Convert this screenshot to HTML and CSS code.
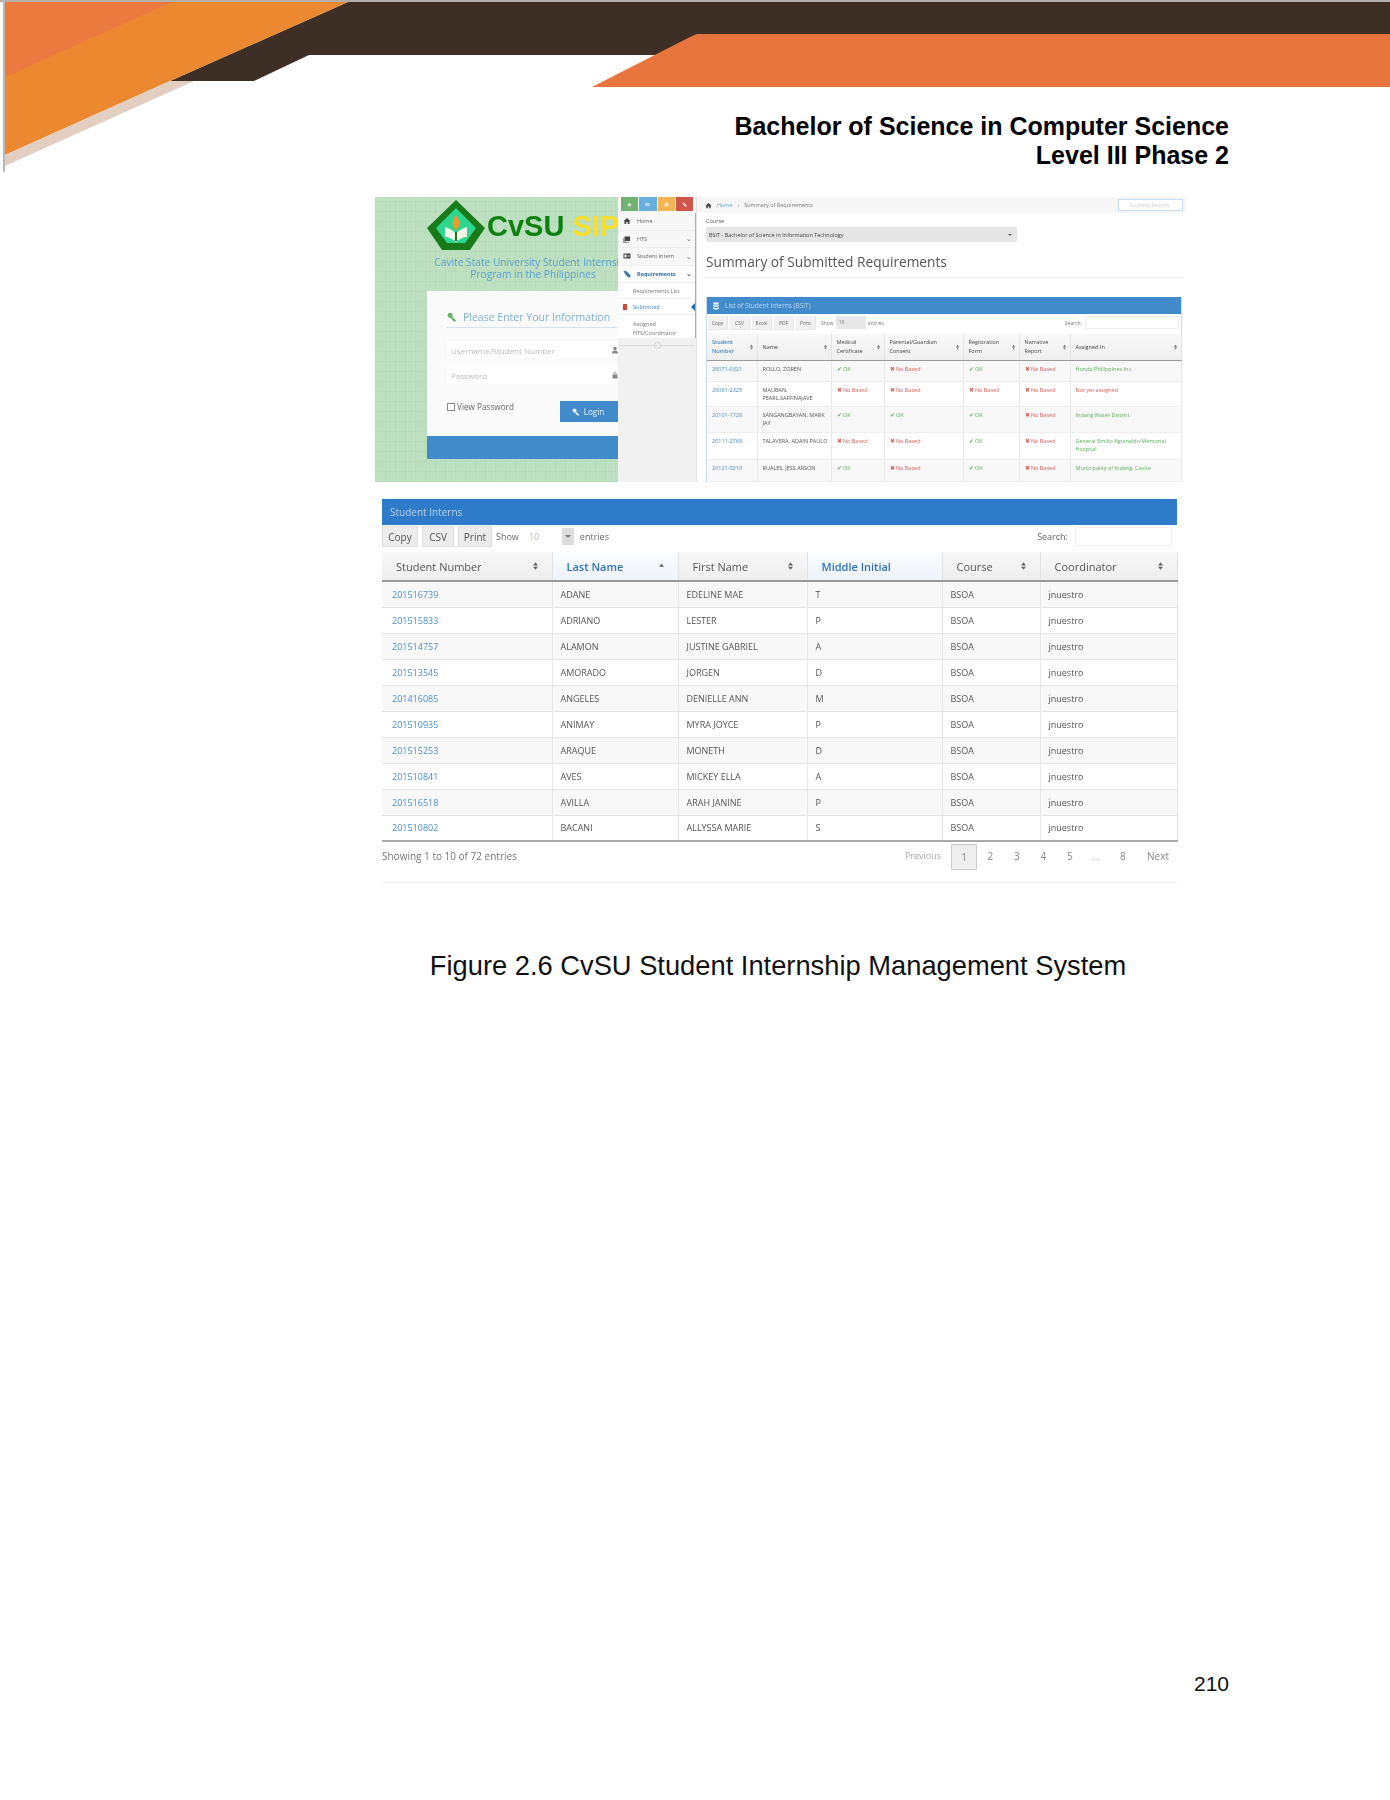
FILE: index.html
```html
<!DOCTYPE html>
<html lang="en">
<head>
<meta charset="utf-8">
<title>CvSU Student Internship Management System</title>
<link rel="stylesheet" href="styles.css">
</head>
<body>
<svg class="defs" width="0" height="0" aria-hidden="true">
  <symbol id="i-home" viewBox="0 0 16 16"><path d="M8 2 1 8.5h2V14h3.5v-4h3v4H13V8.500h2z"/></symbol>
  <symbol id="i-key" viewBox="0 0 16 16"><circle cx="5" cy="5" r="4"/><path d="M7 6l7 7v2h-3l-1-1.500-1 .5-1-2-3-4z"/></symbol>
  <symbol id="i-user" viewBox="0 0 16 16"><circle cx="8" cy="5" r="3.500"/><path d="M2 15c0-4 2-6 6-6s6 2 6 6z"/></symbol>
  <symbol id="i-lock" viewBox="0 0 16 16"><path d="M3 7h10v8H3zM5 7V5a3 3 0 0 1 6 0v2H9.500V5a1.500 1.500 0 0 0-3 0v2z"/></symbol>
  <symbol id="i-db" viewBox="0 0 16 16"><ellipse cx="8" cy="3" rx="6" ry="2.500"/><path d="M2 5c2 2.500 10 2.500 12 0v3c-2 2.500-10 2.500-12 0zM2 10c2 2.500 10 2.500 12 0v3c-2 3-10 3-12 0z"/></symbol>
  <symbol id="i-book" viewBox="0 0 16 16"><path d="M3 3h11v9H5v2H3zM1 6h1v9h10v1H1z"/></symbol>
  <symbol id="i-card" viewBox="0 0 16 16"><path d="M1 3h14v10H1zM3 5v6h4V5zm6 1v1h4V6zm0 3v1h4V9z" fill-rule="evenodd"/></symbol>
  <symbol id="i-pin" viewBox="0 0 16 16"><path d="M1 3l4-2 10 9-1 5-5-1z"/></symbol>
  <symbol id="i-sort" viewBox="0 0 8 12"><path d="M4 0 8 5H0zM4 12 0 7h8z"/></symbol>
  <symbol id="i-up" viewBox="0 0 8 12"><path d="M4 2 8 7H0z"/></symbol>
  <symbol id="i-mail" viewBox="0 0 16 16"><path d="M1 3h14v2L8 9 1 5zM1 7l7 4 7-4v6H1z"/></symbol>
</svg>

<div class="page">
  <header class="top">
    <svg class="banner" viewBox="0 0 1390 172" width="1390" height="172" aria-hidden="true">
      <rect x="0" y="0" width="1390" height="2" fill="#b5afa9"/>
      <rect x="3" y="0" width="2" height="172" fill="#bdb7b1"/>
      <polygon points="348,2 1390,2 1390,55 309,55 254,81 170,81" fill="#3d2f25"/>
      <polygon points="592,87 690,37 697,34 1390,34 1390,87" fill="#e8743e"/>
      <polygon points="5,2 348,2 170,81 5,155" fill="#ec8830"/>
      <polygon points="5,2 172,2 5,77" fill="#ea7a3e"/>
      <polygon points="5,155 170,81 194,81 5,166" fill="#e3cfc2"/>
    </svg>
    <div class="title">
      <div>Bachelor of Science in Computer Science</div>
      <div>Level III Phase 2</div>
    </div>
  </header>

  <section class="shot">
    <div class="login">
      <div class="brand">
        <svg class="logo" viewBox="0 0 58 50" width="58" height="50" aria-hidden="true">
          <polygon points="0,28 29,0 58,28 43,50 15,50" fill="#187a18"/>
          <polygon points="9,28 29,8 49,28 38,43 20,43" fill="#2fd690"/>
          <path d="M18 27c4 1 8 3 11 7 3-4 7-6 11-7v10c-4 0-8 2-11 5-3-3-7-5-11-5z" fill="#f2f5e8"/>
          <path d="M29 30c-5-4-4-10 0-15 4 5 5 11 0 15z" fill="#ee9a2c"/>
          <path d="M28 32h2v9h-2z" fill="#187a18"/>
        </svg>
        <div class="wordmark">CvSU <span class="sip">SIP</span></div>
      </div>
      <div class="subtitle">Cavite State University Student Internship<br>Program in the Philippines</div>
      <div class="card">
        <div class="card-body">
          <div class="card-head"><svg class="ic key"><use href="#i-key"/></svg>Please Enter Your Information</div>
          <div class="field">Username/Student Number<svg class="ic"><use href="#i-user"/></svg></div>
          <div class="field">Password<svg class="ic"><use href="#i-lock"/></svg></div>
          <div class="card-row">
            <span class="check"></span><span class="check-label">View Password</span>
            <span class="login-btn"><svg class="ic"><use href="#i-key"/></svg>Login</span>
          </div>
        </div>
        <div class="card-foot"></div>
      </div>
    </div>

    <aside class="sidebar">
      <div class="shortcuts">
        <span class="sq sq-g"><svg class="ic"><use href="#i-home"/></svg></span>
        <span class="sq sq-b"><svg class="ic"><use href="#i-mail"/></svg></span>
        <span class="sq sq-o"><svg class="ic"><use href="#i-book"/></svg></span>
        <span class="sq sq-r"><svg class="ic"><use href="#i-pin"/></svg></span>
      </div>
      <ul class="nav">
        <li class="nav-item"><svg class="ic"><use href="#i-home"/></svg>Home</li>
        <li class="nav-item"><svg class="ic"><use href="#i-book"/></svg>HTS<i class="chev">⌄</i></li>
        <li class="nav-item"><svg class="ic"><use href="#i-card"/></svg>Student Intern<i class="chev">⌄</i></li>
        <li class="nav-item nav-active"><svg class="ic"><use href="#i-pin"/></svg>Requirements<i class="chev">⌄</i></li>
        <li class="nav-sub">Requirements List</li>
        <li class="nav-sub nav-current">Submitted<span class="nav-arrow"></span></li>
        <li class="nav-sub nav-two">Assigned<br>HTS/Coordinator</li>
      </ul>
      <div class="collapse"><span>‹</span></div>
    </aside>

    <main class="content">
      <div class="crumbs">
        <svg class="ic"><use href="#i-home"/></svg><span class="crumb-link">Home</span><span class="crumb-sep">›</span><span>Summary of Requirements</span>
        <span class="topsearch">Student Search</span>
      </div>
      <div class="course">Course</div>
      <div class="course-select"><span>BSIT - Bachelor of Science in Information Technology</span><i class="caret"></i></div>
      <h1 class="summary">Summary of Submitted Requirements</h1>
      <div class="panel">
        <div class="panel-head"><svg class="ic"><use href="#i-db"/></svg>List of Student Interns (BSIT)</div>
        <div class="tools">
          <span class="tbtn">Copy</span><span class="tbtn">CSV</span><span class="tbtn">Excel</span><span class="tbtn">PDF</span><span class="tbtn">Print</span>
          <span class="tshow">Show</span><span class="tselect">10</span><span>entries</span>
          <span class="tsearch">Search:</span><span class="tinput"></span>
        </div>
        <table class="mini">
          <colgroup><col class="m1"><col class="m2"><col class="m3"><col class="m4"><col class="m5"><col class="m6"><col class="m7"></colgroup>
          <thead>
            <tr>
              <th class="sorted">Student Number<svg class="sort"><use href="#i-sort"/></svg></th>
              <th>Name<svg class="sort"><use href="#i-sort"/></svg></th>
              <th>Medical Certificate<svg class="sort"><use href="#i-sort"/></svg></th>
              <th>Parental/Guardian Consent<svg class="sort"><use href="#i-sort"/></svg></th>
              <th>Registration Form<svg class="sort"><use href="#i-sort"/></svg></th>
              <th>Narrative Report<svg class="sort"><use href="#i-sort"/></svg></th>
              <th>Assigned In<svg class="sort"><use href="#i-sort"/></svg></th>
            </tr>
          </thead>
          <tbody>
            <tr class="r21 odd"><td class="lnk">20071-0321</td><td>ROLLO, ZOREN</td><td class="ok">✔ OK</td><td class="no">✖ No Based</td><td class="ok">✔ OK</td><td class="no">✖ No Based</td><td class="ok">Honda Philippines Inc.</td></tr>
            <tr class="r25"><td class="lnk">20081-2325</td><td>MAUBAN,<br>PEARL,SAFFINAJAVE</td><td class="no">✖ No Based</td><td class="no">✖ No Based</td><td class="no">✖ No Based</td><td class="no">✖ No Based</td><td class="no">Not yet assigned</td></tr>
            <tr class="r26 odd"><td class="lnk">20101-1728</td><td>SANGANGBAYAN, MARK JAY</td><td class="ok">✔ OK</td><td class="ok">✔ OK</td><td class="ok">✔ OK</td><td class="no">✖ No Based</td><td class="ok">Indang Water District</td></tr>
            <tr class="r28"><td class="lnk">20111-2768</td><td>TALAVERA, ADAIN PAULO</td><td class="no">✖ No Based</td><td class="no">✖ No Based</td><td class="ok">✔ OK</td><td class="no">✖ No Based</td><td class="ok">General Emilio Aguinaldo Memorial Hospital</td></tr>
            <tr class="r22 odd"><td class="lnk">20121-0219</td><td>RUALES, JESS ARSON</td><td class="ok">✔ OK</td><td class="no">✖ No Based</td><td class="ok">✔ OK</td><td class="no">✖ No Based</td><td class="ok">Municipality of Indang, Cavite</td></tr>
          </tbody>
        </table>
      </div>
    </main>
  </section>

  <section class="interns">
    <div class="interns-head">Student Interns</div>
    <div class="interns-tools">
      <span class="btn">Copy</span><span class="btn btn-s">CSV</span><span class="btn btn-m">Print</span>
      <span class="show">Show</span><span class="select">10<i class="select-arrow"></i></span><span class="entries">entries</span>
      <span class="search">Search:</span><span class="search-input"></span>
    </div>
    <table class="big">
      <colgroup><col class="b1"><col class="b2"><col class="b3"><col class="b4"><col class="b5"><col class="b6"></colgroup>
      <thead>
        <tr>
          <th>Student Number<svg class="sort"><use href="#i-sort"/></svg></th>
          <th class="hl">Last Name<svg class="sort"><use href="#i-up"/></svg></th>
          <th>First Name<svg class="sort"><use href="#i-sort"/></svg></th>
          <th class="hl">Middle Initial</th>
          <th>Course<svg class="sort"><use href="#i-sort"/></svg></th>
          <th>Coordinator<svg class="sort"><use href="#i-sort"/></svg></th>
        </tr>
      </thead>
      <tbody>
        <tr><td class="lnk">201516739</td><td>ADANE</td><td>EDELINE MAE</td><td>T</td><td>BSOA</td><td>jnuestro</td></tr>
        <tr><td class="lnk">201515833</td><td>ADRIANO</td><td>LESTER</td><td>P</td><td>BSOA</td><td>jnuestro</td></tr>
        <tr><td class="lnk">201514757</td><td>ALAMON</td><td>JUSTINE GABRIEL</td><td>A</td><td>BSOA</td><td>jnuestro</td></tr>
        <tr><td class="lnk">201513545</td><td>AMORADO</td><td>JORGEN</td><td>D</td><td>BSOA</td><td>jnuestro</td></tr>
        <tr><td class="lnk">201416085</td><td>ANGELES</td><td>DENIELLE ANN</td><td>M</td><td>BSOA</td><td>jnuestro</td></tr>
        <tr><td class="lnk">201510935</td><td>ANIMAY</td><td>MYRA JOYCE</td><td>P</td><td>BSOA</td><td>jnuestro</td></tr>
        <tr><td class="lnk">201515253</td><td>ARAQUE</td><td>MONETH</td><td>D</td><td>BSOA</td><td>jnuestro</td></tr>
        <tr><td class="lnk">201510841</td><td>AVES</td><td>MICKEY ELLA</td><td>A</td><td>BSOA</td><td>jnuestro</td></tr>
        <tr><td class="lnk">201516518</td><td>AVILLA</td><td>ARAH JANINE</td><td>P</td><td>BSOA</td><td>jnuestro</td></tr>
        <tr><td class="lnk">201510802</td><td>BACANI</td><td>ALLYSSA MARIE</td><td>S</td><td>BSOA</td><td>jnuestro</td></tr>
      </tbody>
    </table>
    <div class="interns-foot">
      <span class="showing">Showing 1 to 10 of 72 entries</span>
      <div class="pager">
        <span class="pg pg-prev">Previous</span><span class="pg pg-on">1</span><span class="pg">2</span><span class="pg">3</span><span class="pg">4</span><span class="pg">5</span><span class="pg pg-dim">…</span><span class="pg">8</span><span class="pg pg-next">Next</span>
      </div>
    </div>
  </section>

  <p class="caption">Figure 2.6 CvSU Student Internship Management System</p>
  <p class="pageno">210</p>
</div>
</body>
</html>
```

FILE: styles.css
```css
* { box-sizing: border-box; }
html, body { margin: 0; padding: 0; background: #fff; }
body { font-family: "Open Sans", "Liberation Sans", sans-serif; color: #555; }
.defs { display: block; height: 0; }
.page { width: 1390px; height: 1800px; overflow: hidden; }
ul { list-style: none; margin: 0; padding: 0; }

/* header */
.top { display: grid; height: 172px; }
.banner { grid-area: 1 / 1; display: block; }
.title {
  grid-area: 1 / 1;
  padding: 112px 161px 0 0;
  text-align: right;
  font: bold 25px/29px "Liberation Sans", Arial, sans-serif;
  color: #000;
}

/* top screenshot */
.shot {
  display: flex;
  width: 811px;
  height: 285px;
  margin: 25px 0 0 375px;
  overflow: hidden;
  filter: blur(.7px);
  background: #fff;
}
.ic { width: 8px; height: 8px; fill: currentColor; flex: none; }

.login {
  width: 243px;
  flex: none;
  overflow: hidden;
  padding: 3px 0 0 52px;
  background-color: #bde0c1;
  background-image:
    repeating-linear-gradient(0deg, rgba(120,170,130,.09) 0 1px, transparent 1px 10px),
    repeating-linear-gradient(90deg, rgba(120,170,130,.09) 0 1px, transparent 1px 10px);
}
.brand { display: flex; align-items: center; gap: 2px; width: 300px; }
.logo { flex: none; }
.wordmark { font: bold 29px/1 "Liberation Sans", Arial, sans-serif; color: #0f7f10; white-space: nowrap; padding-top: 3px; }
.sip { color: #f7df2c; }
.subtitle {
  width: 212px;
  margin-top: 6px;
  font-size: 10.200px;
  line-height: 12px;
  text-align: center;
  color: #5a9fd0;
  white-space: nowrap;
}
.card { width: 316px; margin-top: 11px; }
.card-body { height: 145px; background: #fafafa; padding: 18px 0 0 20px; }
.card-head {
  display: flex;
  align-items: center;
  gap: 6px;
  height: 19px;
  padding-bottom: 3px;
  border-bottom: 1px solid #d4e3f1;
  font-size: 10.500px;
  color: #7fb0d8;
  white-space: nowrap;
}
.card-head .key { width: 10px; height: 10px; color: #6cb06c; }
.field {
  display: flex;
  align-items: center;
  justify-content: space-between;
  width: 173px;
  height: 18px;
  margin-top: 7px;
  padding: 0 1px 0 4px;
  background: #fff;
  border-radius: 2px;
  font-size: 8px;
  color: #bbb;
}
.field .ic { color: #888; }
.card-head + .field { margin-top: 13px; }
.card-row { display: flex; align-items: flex-start; margin-top: 17px; height: 21px; font-size: 8.200px; line-height: 12px; color: #666; }
.check { width: 8px; height: 8px; margin-top: 2px; border: 1px solid #888; background: #fff; margin-right: 2px; }
.check-label { width: 103px; }
.login-btn { display: flex; align-items: center; justify-content: center; gap: 4px; width: 70px; height: 21px; padding-right: 14px; background: #428bca; color: #e4eef7; }
.card-foot { height: 23px; background: #428bca; }

.sidebar { width: 79px; flex: none; background: #f1f1f1; border-right: 1px solid #e4e4e4; }
.shortcuts { display: flex; gap: 1px; height: 16px; padding: 0 3px 2px; background: #f6f6f6; }
.sq { flex: 1; display: flex; align-items: center; justify-content: center; color: #fff; opacity: .95; }
.sq .ic { width: 5px; height: 5px; opacity: .75; }
.sq-g { background: #6dae6d; }
.sq-b { background: #5fabdf; }
.sq-o { background: #f6b24c; }
.sq-r { background: #cd4e40; }
.nav { background: #fff; height: 125px; border-right: 1px solid #8bb6da; }
.nav-item {
  display: flex;
  align-items: center;
  gap: 6px;
  height: 17.500px;
  padding: 0 3px 0 5px;
  background: #f7f7f7;
  border-bottom: 1px solid #eee;
  font-size: 5.500px;
  color: #666;
}
.nav-item .ic { color: #444; }
.nav-active { color: #2e6da4; font-weight: 700; background: #fff; }
.nav-active .ic { color: #3a76b0; }
.chev { margin-left: auto; font-style: normal; font-size: 7px; line-height: 5px; color: #777; }
.nav-sub { display: flex; align-items: center; position: relative; height: 16px; padding-left: 15px; background: #fff; border-bottom: 1px solid #f0f0f0; font-size: 5.500px; color: #777; }
.nav-current { color: #4a86bd; }
.nav-current::before { content: ""; position: absolute; left: 5px; top: 5px; width: 4px; height: 6px; background: #cc4a3a; }
.nav-arrow { position: absolute; right: 0; top: 4px; border: 4px solid transparent; border-right-color: #1d6fb2; border-left: 0; }
.nav-two { display: block; height: 23px; padding-top: 5px; line-height: 8.500px; border-bottom: 0; }
.collapse { display: flex; justify-content: center; align-items: center; height: 14px; background: linear-gradient(#ddd, #ddd) center / 76px 1px no-repeat; }
.collapse span { display: block; width: 7px; height: 7px; border-radius: 50%; border: 1px solid #ccc; background: #f4f4f4; font-size: 5px; line-height: 5px; text-align: center; color: #999; }

.content { flex: 1; min-width: 0; }
.crumbs {
  display: flex;
  align-items: center;
  gap: 5px;
  height: 16px;
  padding: 0 3px 0 8px;
  background: #f6f6f6;
  font-size: 5.500px;
  color: #777;
}
.crumbs .ic { color: #444; width: 7px; height: 7px; }
.crumb-link { color: #6ba4d6; }
.topsearch { margin-left: auto; width: 65px; height: 12px; padding-left: 11px; line-height: 11px; border: 1px solid #c6dff3; background: #fff; color: #ccc; }
.course { margin: 4px 0 0 9px; font-size: 5.500px; line-height: 9px; color: #555; }
.course-select {
  display: flex;
  justify-content: space-between;
  align-items: center;
  width: 311px;
  height: 15px;
  margin: 1px 0 0 9px;
  padding: 0 5px 0 3px;
  background: #e5e5e5;
  border-radius: 2px;
  font-size: 5.500px;
  color: #444;
}
.caret { width: 0; height: 0; border: 2.500px solid transparent; border-top-color: #666; border-bottom: 0; }
.summary {
  margin: 10px 0 0 9px;
  height: 26px;
  width: 477px;
  border-bottom: 1px solid #eee;
  font-size: 13.700px;
  font-weight: 400;
  line-height: 20px;
  color: #555;
  white-space: nowrap;
}
.panel { width: 476px; margin: 19px 0 0 9px; border-left: 1px solid #c5ddee; border-right: 1px solid #c5ddee; }
.panel-head { display: flex; align-items: center; gap: 5px; height: 17px; padding-left: 5px; background: #428bca; font-size: 6.500px; color: #bcd7ee; white-space: nowrap; }
.panel-head .ic { color: #e9f2fa; }
.tools { display: flex; align-items: center; gap: 2px; height: 20px; padding: 0 2px 3px 1px; font-size: 5px; color: #777; }
.tbtn { width: 20px; height: 14px; line-height: 14px; text-align: center; background: #f1f1f1; border: 1px solid #e6e6e6; border-width: 0 1px 1px 0; color: #666; }
.tshow { margin-left: 3px; }
.tselect { width: 30px; height: 13px; line-height: 13px; padding-left: 3px; background: #e7e7e7; }
.tsearch { margin-left: auto; margin-right: 1px; }
.tinput { width: 94px; height: 13px; background: #fff; border: 1px solid #eee; }
.mini { width: 474px; table-layout: fixed; border-collapse: collapse; font-size: 5.500px; color: #555; }
.m1 { width: 50px; } .m2 { width: 74px; } .m3 { width: 53px; } .m4 { width: 79px; }
.m5 { width: 56px; } .m6 { width: 51px; } .m7 { width: 111px; }
.mini th {
  position: relative;
  height: 26px;
  padding: 0 9px 0 5px;
  background: linear-gradient(#f8f8f8, #efefef);
  border-right: 1px solid #e4e4e4;
  border-bottom: 1px solid #999;
  text-align: left;
  font-weight: 400;
  color: #444;
  line-height: 8.500px;
}
.mini th.sorted { color: #3f87c4; font-weight: 600; }
.mini .sort { position: absolute; right: 4px; top: 10px; width: 3px; height: 6px; fill: #666; }
.mini td { padding: 4px 1px 0 5px; vertical-align: top; line-height: 8.500px; border-bottom: 1px solid #eee; border-right: 1px solid #e8e8e8; }
.mini .odd td { background: #f8f8f8; }
.r21 { height: 21px; } .r25 { height: 25px; } .r26 { height: 26px; } .r28 { height: 27px; } .r22 { height: 22px; }
.lnk { color: #428bca; }
.mini .ok { color: #5cb05c; }
.mini .no { color: #d9625a; }

/* lower screenshot */
.interns { width: 795px; margin: 17px 0 0 382px; filter: blur(.75px); }
.interns-head { height: 26px; padding-left: 8px; background: #2d7bc9; font-size: 10px; line-height: 26px; color: #b7d3ee; }
.interns-tools { display: flex; align-items: center; height: 27px; padding-bottom: 5px; font-size: 9px; color: #666; }
.btn { width: 36px; height: 21px; margin-right: 4px; line-height: 21px; text-align: center; background: #ececec; border: 1px solid #ddd; font-size: 10px; color: #555; }
.btn-s { width: 32px; }
.btn-m { width: 34px; }
.select { position: relative; width: 50px; height: 17px; margin-left: 5px; padding-left: 5px; line-height: 17px; color: #bbb; background: #fff; }
.select-arrow { position: absolute; right: 0; top: 0; width: 12px; height: 17px; background: #ddd; }
.select-arrow::after { content: ""; position: absolute; left: 3px; top: 7px; border: 3px solid transparent; border-top-color: #777; border-bottom: 0; }
.entries { margin-left: 6px; }
.search { margin-left: auto; margin-right: 7px; }
.search-input { width: 97px; height: 19px; margin-right: 5px; background: #fff; border: 1px solid #f0f0f0; }
.big { width: 795px; table-layout: fixed; border-collapse: collapse; font-size: 9px; color: #555; border-bottom: 2px solid #aaa; }
.b1 { width: 170px; } .b2 { width: 126px; } .b3 { width: 129px; } .b4 { width: 135px; } .b5 { width: 98px; } .b6 { width: 137px; }
.big th {
  position: relative;
  height: 29px;
  padding: 0 0 0 14px;
  background: linear-gradient(#f8f8f8, #ededed);
  border-right: 1px solid #e2e2e2;
  border-bottom: 2px solid #999;
  text-align: left;
  font-size: 11px;
  font-weight: 400;
  color: #555;
}
.big th.hl { background: linear-gradient(#fafcff, #eef3fa); color: #2f73c0; font-weight: 600; }
.big .sort { position: absolute; right: 14px; top: 10px; width: 5px; height: 8px; fill: #666; }
.big td { height: 26px; padding: 0 0 0 8px; border-right: 1px solid #e6e6e6; border-bottom: 1px solid #e4e4e4; white-space: nowrap; }
.big td.lnk { padding-left: 10px; color: #4c8fcb; }
.big tbody tr:nth-child(odd) td { background: #f8f8f8; }
.interns-foot { display: flex; justify-content: space-between; height: 41px; border-bottom: 1px solid #f0f0f0; font-size: 10px; color: #777; }
.showing { line-height: 29px; }
.pager { display: flex; height: 26px; margin: 2px 3px 0 0; }
.pg { width: 26.500px; line-height: 24px; text-align: center; color: #888; }
.pg-prev { width: 52px; padding-right: 4px; color: #aaa; font-size: 9px; }
.pg-on { background: #eee; border: 1px solid #ccc; width: 26px; }
.pg-dim { color: #bbb; }
.pg-next { width: 38px; padding-left: 6px; }

/* caption */
.caption { margin: 66px 0 0 0; width: 1556px; text-align: center; font: 27.300px/34px "Liberation Sans", Arial, sans-serif; color: #111; }
.pageno { margin: 689px 161px 0 0; text-align: right; font: 21px/24px "Liberation Sans", Arial, sans-serif; color: #111; }
```
